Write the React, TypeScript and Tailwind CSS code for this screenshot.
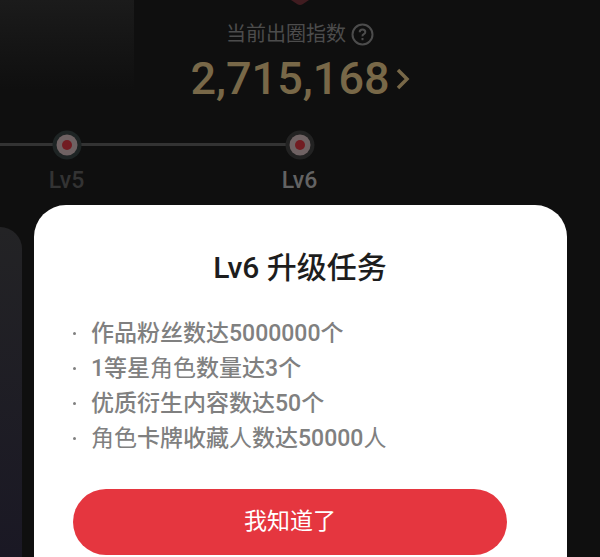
type Run = { text: string; thin?: boolean };

const TASKS: Run[][] = [
  [{ text: "作品粉丝数达5000000个" }],
  [{ text: "1等星" }, { text: "角色", thin: true }, { text: "数量达3个" }],
  [{ text: "优质衍生内容数达50个" }],
  [
    { text: "角色", thin: true },
    { text: "卡牌收藏" },
    { text: "人", thin: true },
    { text: "数达50000" },
    { text: "人", thin: true },
  ],
];

const LevelDot = ({ ring }: { ring: string }) => (
  <svg viewBox="0 0 30 30" className="relative w-[30px] h-[30px]" aria-hidden="true">
    <circle cx="15" cy="15" r="14.5" fill={ring} />
    <circle cx="15" cy="15" r="10.5" fill="#6f6263" />
    <circle cx="15" cy="15" r="5" fill="#721c22" />
  </svg>
);

/* ===== INDEX HEADER ===== */
const IndexHeader = () => (
  <header className="relative h-[130px] overflow-hidden">
    <div className="absolute left-0 top-0 w-[134px] h-[90px] bg-linear-to-b from-[#1b1b1b] to-[#0f0f0f]" />
    <svg viewBox="0 0 20 6" className="absolute left-1/2 top-0 -translate-x-1/2 w-5 h-[6px]" aria-hidden="true">
      <path d="M1 0h18l-6 4q-3 2-6 0z" fill="#401c20" />
    </svg>

    <div className="relative flex flex-col items-center pt-5">
      <div className="flex items-center gap-[5px] text-xl leading-7 text-[#4c4c4c]">
        当前出圈指数
        <button type="button" aria-label="说明" className="h-[23px]">
          <svg viewBox="0 0 23 23" className="w-[23px] h-[23px]" fill="none" stroke="currentColor" strokeWidth="2" aria-hidden="true">
            <circle cx="11.5" cy="11.5" r="10" />
            <path d="M8.7 9.2q0-2.7 2.8-2.7t2.8 2.5q0 1.4-1.5 2.2t-1.3 2.1" />
            <path d="M11.5 15v2.2" />
          </svg>
        </button>
      </div>
      <a href="#index" className="flex items-center gap-[6px] text-[#786848]">
        <span className="font-medium text-[45px] leading-[62px]">2,715,168</span>
        <svg viewBox="0 0 14 22" className="w-[14px] h-[22px]" fill="none" stroke="currentColor" strokeWidth="3.5" aria-hidden="true">
          <path d="M2 2l9 9-9 9" />
        </svg>
      </a>
    </div>
  </header>
);

/* ===== LEVEL TRACK ===== */
const LevelTrack = () => (
  <div className="relative">
    <div className="absolute left-0 top-[13px] w-1/2 h-[3px] bg-[#333333]" />
    <div className="flex pl-[33px] gap-[166px] text-[23px] leading-[42px] font-medium">
      <div className="w-[67px] flex flex-col items-center text-[#333333]">
        <LevelDot ring="#1e2424" />
        Lv5
      </div>
      <div className="w-[67px] flex flex-col items-center text-[#636363]">
        <LevelDot ring="#222222" />
        Lv6
      </div>
    </div>
  </div>
);

/* ===== UPGRADE DIALOG ===== */
const UpgradeDialog = () => (
  <div
    role="dialog"
    aria-labelledby="dialog-title"
    className="absolute left-[34px] right-[33px] top-[205px] bottom-0 bg-white rounded-t-[32px] pt-[43px] pl-[39px] pr-[60px]"
  >
    <h1 id="dialog-title" className="pl-5 text-center text-[30px] leading-10 font-medium text-[#1d1d1d]">
      Lv6 升级任务
    </h1>
    <ul className="mt-7 text-[23px] leading-[35px] font-medium text-[#808080]">
      {TASKS.map((runs, i) => (
        <li key={i} className="flex items-center whitespace-nowrap">
          <span className="w-[3px] h-[3px] mr-[15px] rounded-full bg-[#808080]" />
          <span>
            {runs.map((run, j) => (
              <span key={j} className={run.thin ? "font-normal" : undefined}>
                {run.text}
              </span>
            ))}
          </span>
        </li>
      ))}
    </ul>
    <button
      type="button"
      className="mt-[33px] w-full h-[66px] rounded-full bg-[#e5363f] text-white text-[23px]"
    >
      我知道了
    </button>
  </div>
);

export default function App() {
  return (
    <div className="relative min-h-screen flex flex-col overflow-hidden bg-[#0f0f0f] font-[Roboto,'Noto_Sans_CJK_SC',sans-serif]">
      <IndexHeader />
      <LevelTrack />
      {/* previous card, peeking out from behind the dialog */}
      <div className="mt-[25px] flex-1 w-[22px] rounded-tr-[22px] bg-linear-to-b from-[#232325] to-[#1a1824]" />
      <UpgradeDialog />
    </div>
  );
}
